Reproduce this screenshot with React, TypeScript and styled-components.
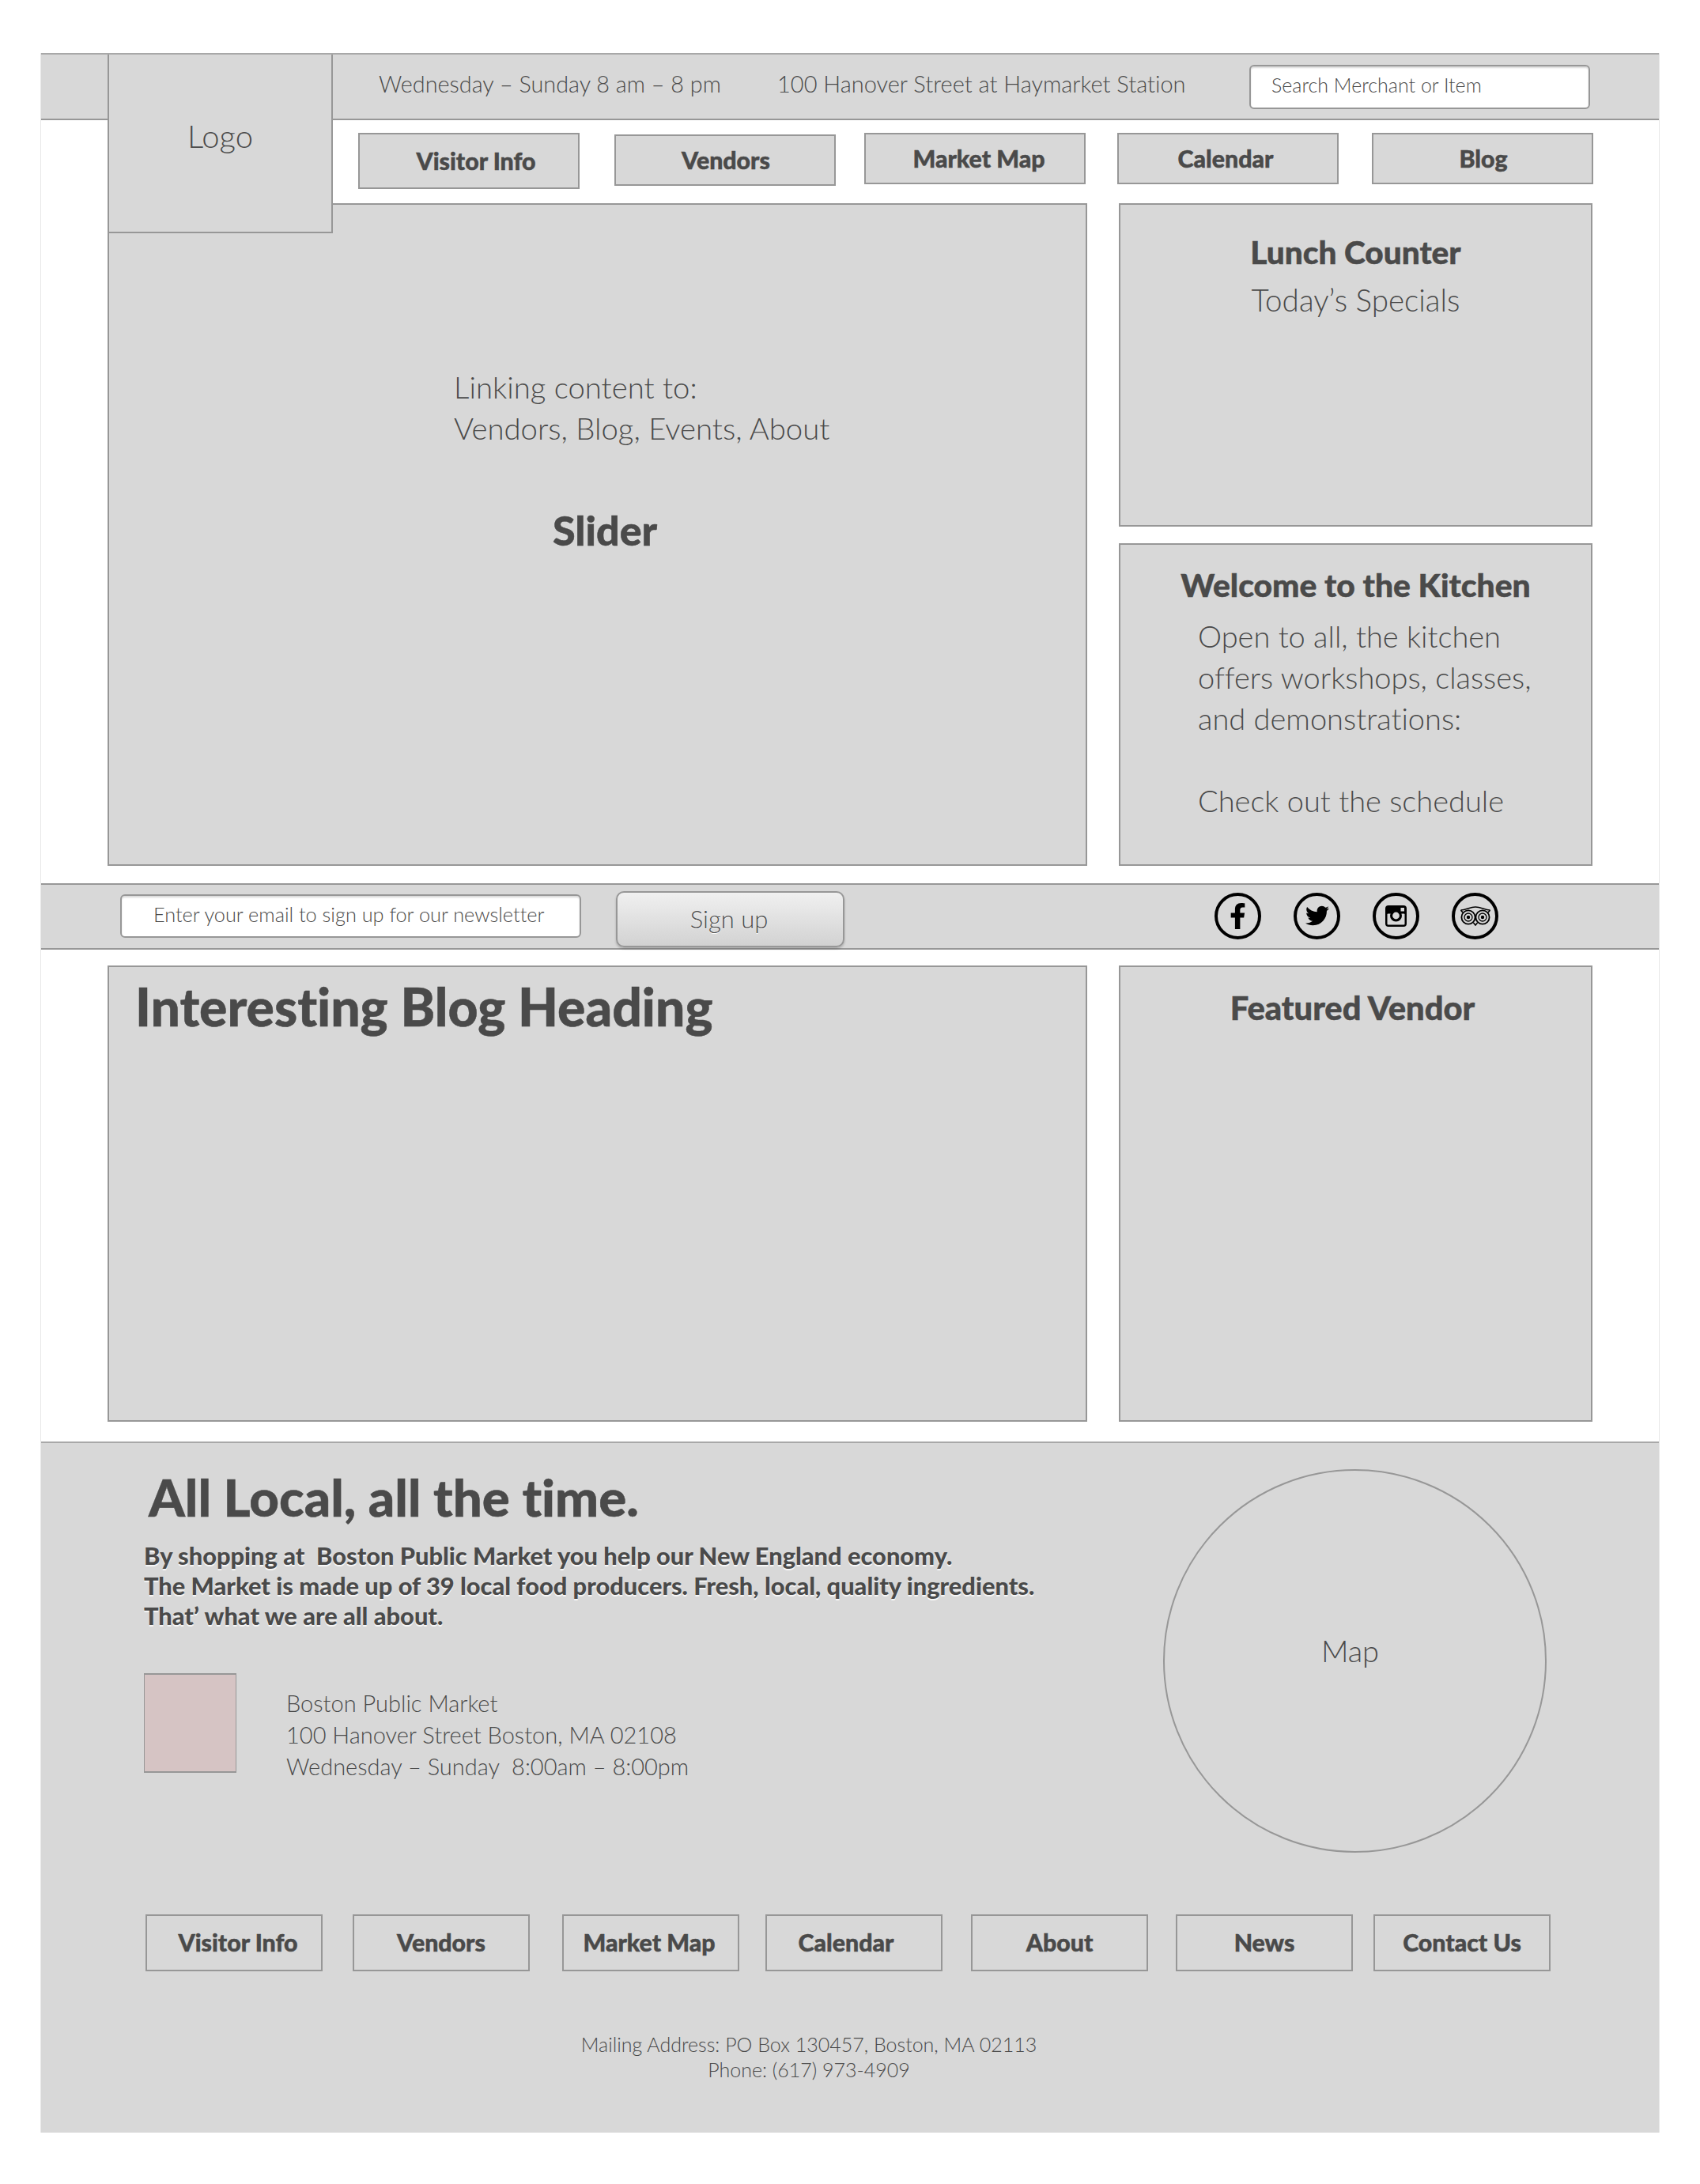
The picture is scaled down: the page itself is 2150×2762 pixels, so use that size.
import React from 'react';
import styled, { createGlobalStyle, css } from 'styled-components';
import { FaFacebookF, FaTwitter } from 'react-icons/fa';

const GREY = '#d8d8d8';
const LINE = '#979797';
const INK = '#4a4a4a';

const GlobalStyle = createGlobalStyle`
  html, body {
    margin: 0;
    background: #fff;
  }
  * {
    box-sizing: border-box;
  }
  body {
    font-family: Lato, "Open Sans", "Liberation Sans", sans-serif;
    font-variant-ligatures: none;
    color: ${INK};
  }
`;

// Lato stops short of the reference's heavy weight, a thin stroke makes up for it
const heavy = css`
  font-weight: 900;
  -webkit-text-stroke: 0.5px ${INK};
`;

const topNav = [
  { label: 'Visitor Info', gap: 33, height: 71, nudge: 9 },
  { label: 'Vendors', gap: 44, height: 65, drop: 2, nudge: 1 },
  { label: 'Market Map', gap: 36, height: 65, nudge: 5 },
  { label: 'Calendar', gap: 40, height: 65, nudge: -3 },
  { label: 'Blog', gap: 42, height: 65, nudge: 1 },
];

const footerNav = [
  { label: 'Visitor Info', gap: 0, nudge: 5 },
  { label: 'Vendors', gap: 38, nudge: 0 },
  { label: 'Market Map', gap: 41, nudge: -2 },
  { label: 'Calendar', gap: 33, nudge: -10 },
  { label: 'About', gap: 36, nudge: 0 },
  { label: 'News', gap: 35, nudge: 0 },
  { label: 'Contact Us', gap: 26, nudge: 0 },
];

const App = () => {
  return (
    <>
      <GlobalStyle />
      <Frame>
        <TopBar>
          <Logo>Logo</Logo>
          <Hours>Wednesday – Sunday 8 am – 8 pm</Hours>
          <Address>100 Hanover Street at Haymarket Station</Address>
          <SearchField>Search Merchant or Item</SearchField>
        </TopBar>

        <NavRow>
          {topNav.map((item) => (
            <NavItem key={item.label} $gap={item.gap} $height={item.height} $drop={item.drop || 0} $nudge={item.nudge}>
              {item.label}
            </NavItem>
          ))}
        </NavRow>

        <MainGrid>
          <Slider>
            <SliderCopy>
              Linking content to:
              <br />
              Vendors, Blog, Events, About
            </SliderCopy>
            <SliderTitle>Slider</SliderTitle>
          </Slider>
          <SideColumn>
            <SideCard>
              <LunchTitle>Lunch Counter</LunchTitle>
              <LunchSub>Today’s Specials</LunchSub>
            </SideCard>
            <SideCard>
              <KitchenTitle>Welcome to the Kitchen</KitchenTitle>
              <KitchenCopy>
                Open to all, the kitchen
                <br />
                offers workshops, classes,
                <br />
                and demonstrations:
                <br />
                <br />
                Check out the schedule
              </KitchenCopy>
            </SideCard>
          </SideColumn>
        </MainGrid>

        <NewsletterBar>
          <EmailField>Enter your email to sign up for our newsletter</EmailField>
          <SignUp>Sign up</SignUp>
          <Socials>
            <Social>
              <FaFacebookF size={33} />
            </Social>
            <Social>
              <FaTwitter size={30} />
            </Social>
            <Social>
              <InstagramIcon />
            </Social>
            <Social>
              <OwlIcon />
            </Social>
          </Socials>
        </NewsletterBar>

        <BlogGrid>
          <BlogCard>
            <BlogHeading>Interesting Blog Heading</BlogHeading>
          </BlogCard>
          <VendorCard>
            <VendorTitle>Featured Vendor</VendorTitle>
          </VendorCard>
        </BlogGrid>

        <Footer>
          <FooterTop>
            <FooterLeft>
              <Tagline>All Local, all the time.</Tagline>
              <Pitch>
                By shopping at&nbsp; Boston Public Market you help our New England economy.
                <br />
                The Market is made up of 39 local food producers. Fresh, local, quality ingredients.
                <br />
                That’ what we are all about.
              </Pitch>
              <Location>
                <Swatch />
                <LocationText>
                  Boston Public Market
                  <br />
                  100 Hanover Street Boston, MA 02108
                  <br />
                  Wednesday – Sunday&nbsp; 8:00am – 8:00pm
                </LocationText>
              </Location>
            </FooterLeft>
            <MapCircle>Map</MapCircle>
          </FooterTop>

          <FooterNav>
            {footerNav.map((item) => (
              <FooterLink key={item.label} $gap={item.gap} $nudge={item.nudge}>
                {item.label}
              </FooterLink>
            ))}
          </FooterNav>

          <Mailing>
            Mailing Address: PO Box 130457, Boston, MA 02113
            <br />
            Phone: (617) 973-4909
          </Mailing>
        </Footer>
      </Frame>
    </>
  );
};

const InstagramIcon = () => (
  <svg width="27" height="27" viewBox="0 0 27 27">
    <rect width="27" height="27" rx="4" fill="#000" />
    <rect x="2.5" y="10.5" width="22" height="14" rx="1" fill={GREY} />
    <rect x="19.5" y="3" width="4.5" height="4.5" fill={GREY} />
    <circle cx="13.5" cy="13" r="7.5" fill="#000" />
    <circle cx="13.5" cy="13" r="4.4" fill={GREY} />
  </svg>
);

const OwlIcon = () => (
  <svg width="38" height="25" viewBox="0 0 38 25" fill="none" stroke="#000">
    <path d="M0.5 5 C7 5 12 1 19 1 C26 1 31 5 37.5 5" strokeWidth="1.6" />
    <path d="M0.5 5 L3 8 M37.5 5 L35 8 M16.5 21 L19 24 L21.5 21" strokeWidth="1.6" />
    <circle cx="10" cy="14" r="8.6" strokeWidth="1.8" />
    <circle cx="28" cy="14" r="8.6" strokeWidth="1.8" />
    <circle cx="10" cy="14" r="5" strokeWidth="1.3" />
    <circle cx="28" cy="14" r="5" strokeWidth="1.3" />
    <circle cx="10" cy="14" r="2.2" fill="#000" stroke="none" />
    <circle cx="28" cy="14" r="2.2" fill="#000" stroke="none" />
  </svg>
);

export default App;

const Frame = styled.div`
  width: 2048px;
  height: 2630px;
  margin: 67px 0 65px 51px;
  background: #fff;
  border-left: 1px solid #e8e8e8;
  border-right: 1px solid #e8e8e8;
`;

const TopBar = styled.header`
  position: relative;
  display: flex;
  align-items: center;
  height: 85px;
  padding-bottom: 8px;
  background: ${GREY};
  border-top: 2px solid #a8a8a8;
  border-bottom: 2px solid ${LINE};
`;

const Logo = styled.div`
  position: absolute;
  left: 84px;
  top: 0;
  z-index: 1;
  width: 285px;
  height: 226px;
  padding-top: 80px;
  background: ${GREY};
  border: 2px solid ${LINE};
  border-top: 0;
  font-size: 40px;
  font-weight: 300;
  line-height: 46px;
  text-align: center;
`;

const Hours = styled.div`
  margin-left: 427px;
  width: 504px;
  font-size: 28.8px;
  font-weight: 300;
`;

const Address = styled.div`
  width: 597px;
  font-size: 29px;
  font-weight: 300;
`;

const SearchField = styled.div`
  display: flex;
  align-items: center;
  width: 431px;
  height: 56px;
  margin-top: 8px;
  padding: 0 0 5px 26px;
  background: #fff;
  border: 2px solid ${LINE};
  border-radius: 6px;
  box-shadow: inset 0 2px 2px rgba(0, 0, 0, 0.15);
  font-size: 25px;
  font-weight: 300;
`;

const NavRow = styled.nav`
  display: flex;
  align-items: flex-start;
  height: 105px;
  padding: 16px 0 0 368px;
`;

const NavItem = styled.div<{ $gap: number; $height: number; $drop: number; $nudge: number }>`
  display: flex;
  align-items: center;
  justify-content: center;
  width: 280px;
  height: ${(p) => p.$height}px;
  margin-left: ${(p) => p.$gap}px;
  margin-top: ${(p) => p.$drop}px;
  padding-bottom: 2px;
  padding-left: ${(p) => Math.max(p.$nudge, 0) * 2}px;
  padding-right: ${(p) => Math.max(-p.$nudge, 0) * 2}px;
  background: ${GREY};
  border: 2px solid ${LINE};
  font-size: 30.3px;
  ${heavy}
`;

const MainGrid = styled.main`
  display: grid;
  grid-template-columns: 1239px 599px;
  column-gap: 40px;
  height: 838px;
  margin-left: 84px;
`;

const Slider = styled.section`
  background: ${GREY};
  border: 2px solid ${LINE};
  padding: 204px 0 0 436px;
`;

const SliderCopy = styled.p`
  margin: 0;
  font-size: 38.3px;
  font-weight: 300;
  line-height: 52px;
`;

const SliderTitle = styled.h2`
  margin: 74px 0 0 125px;
  font-size: 52px;
  line-height: 58px;
  ${heavy}
`;

const SideColumn = styled.div`
  display: grid;
  grid-template-rows: 409px 408px;
  row-gap: 21px;
`;

const SideCard = styled.section`
  background: ${GREY};
  border: 2px solid ${LINE};
`;

const LunchTitle = styled.h3`
  margin: 35px 0 0;
  font-size: 40.6px;
  line-height: 50px;
  text-align: center;
  ${heavy}
`;

const LunchSub = styled.div`
  margin-top: 10px;
  font-size: 38.6px;
  font-weight: 300;
  line-height: 50px;
  text-align: center;
`;

const KitchenTitle = styled.h3`
  margin: 26px 0 0;
  font-size: 40.8px;
  line-height: 50px;
  text-align: center;
  ${heavy}
`;

const KitchenCopy = styled.p`
  margin: 13px 0 0 98px;
  font-size: 38px;
  font-weight: 300;
  line-height: 52px;
`;

const NewsletterBar = styled.section`
  position: relative;
  display: flex;
  align-items: center;
  height: 84px;
  margin-top: 22px;
  padding-left: 100px;
  background: ${GREY};
  border-top: 2px solid ${LINE};
  border-bottom: 2px solid ${LINE};
`;

const EmailField = styled.div`
  display: flex;
  align-items: center;
  width: 583px;
  height: 55px;
  margin-top: -2px;
  padding: 0 0 5px 40px;
  background: #fff;
  border: 2px solid ${LINE};
  border-radius: 6px;
  box-shadow: inset 0 2px 2px rgba(0, 0, 0, 0.15);
  font-size: 25.3px;
  font-weight: 300;
`;

const SignUp = styled.button`
  width: 289px;
  height: 71px;
  margin: 6px 0 0 44px;
  padding: 0 3px 1px 0;
  background: linear-gradient(#f0f0f0, #d2d2d2);
  border: 2px solid ${LINE};
  border-radius: 10px;
  box-shadow: 0 2px 3px rgba(0, 0, 0, 0.2);
  color: ${INK};
  font-family: inherit;
  font-size: 31px;
  font-weight: 300;
  text-shadow: 0 1px 0 #fff;
`;

const Socials = styled.div`
  display: flex;
  gap: 41px;
  margin: -2px 0 0 468px;
`;

const Social = styled.div`
  display: flex;
  align-items: center;
  justify-content: center;
  width: 59px;
  height: 59px;
  border: 4px solid #000;
  border-radius: 50%;
  color: #000;
`;

const BlogGrid = styled.section`
  display: grid;
  grid-template-columns: 1239px 599px;
  column-gap: 40px;
  height: 577px;
  margin: 20px 0 0 84px;
`;

const BlogCard = styled.article`
  background: ${GREY};
  border: 2px solid ${LINE};
  padding: 12px 0 0 33px;
`;

const BlogHeading = styled.h1`
  margin: 0;
  font-size: 66px;
  line-height: 76px;
  ${heavy}
`;

const VendorCard = styled.aside`
  background: ${GREY};
  border: 2px solid ${LINE};
  padding: 27px 8px 0 0;
`;

const VendorTitle = styled.h3`
  margin: 0;
  font-size: 41.7px;
  line-height: 48px;
  text-align: center;
  ${heavy}
`;

const Footer = styled.footer`
  height: 874px;
  margin-top: 25px;
  padding: 33px 0 0 130px;
  background: ${GREY};
  border-top: 2px solid #a8a8a8;
`;

const FooterTop = styled.div`
  display: flex;
  align-items: flex-start;
`;

const FooterLeft = styled.div`
  width: 1289px;
`;

const Tagline = styled.h2`
  margin: 3px 0 0 6px;
  font-size: 65.4px;
  line-height: 64px;
  ${heavy}
`;

const Pitch = styled.p`
  margin: 24px 0 0;
  font-size: 30.8px;
  font-weight: 900;
  line-height: 38px;
  text-shadow: 0 2px 0 rgba(255, 255, 255, 0.8);
`;

const Location = styled.div`
  display: flex;
  align-items: flex-start;
  margin-top: 53px;
`;

const Swatch = styled.div`
  width: 117px;
  height: 126px;
  background: #d6c4c4;
  border: 1px solid ${LINE};
  border-top-width: 2px;
  border-bottom-width: 2px;
`;

const LocationText = styled.div`
  margin: 18px 0 0 63px;
  font-size: 29px;
  font-weight: 300;
  line-height: 40px;
`;

const MapCircle = styled.div`
  width: 485px;
  height: 485px;
  padding-top: 204px;
  border: 2px solid ${LINE};
  border-radius: 50%;
  font-size: 38px;
  font-weight: 300;
  line-height: 46px;
  text-align: center;
  text-indent: -12px;
`;

const FooterNav = styled.nav`
  display: flex;
  margin: 78px 0 0 2px;
`;

const FooterLink = styled.div<{ $gap: number; $nudge: number }>`
  display: flex;
  align-items: center;
  justify-content: center;
  width: 224px;
  height: 72px;
  margin-left: ${(p) => p.$gap}px;
  padding-bottom: 3px;
  padding-left: ${(p) => Math.max(p.$nudge, 0) * 2}px;
  padding-right: ${(p) => Math.max(-p.$nudge, 0) * 2}px;
  border: 2px solid ${LINE};
  font-size: 30.3px;
  ${heavy}
`;

const Mailing = styled.div`
  width: 1682px;
  margin-top: 76px;
  font-size: 25px;
  font-weight: 300;
  line-height: 32px;
  text-align: center;
`;
